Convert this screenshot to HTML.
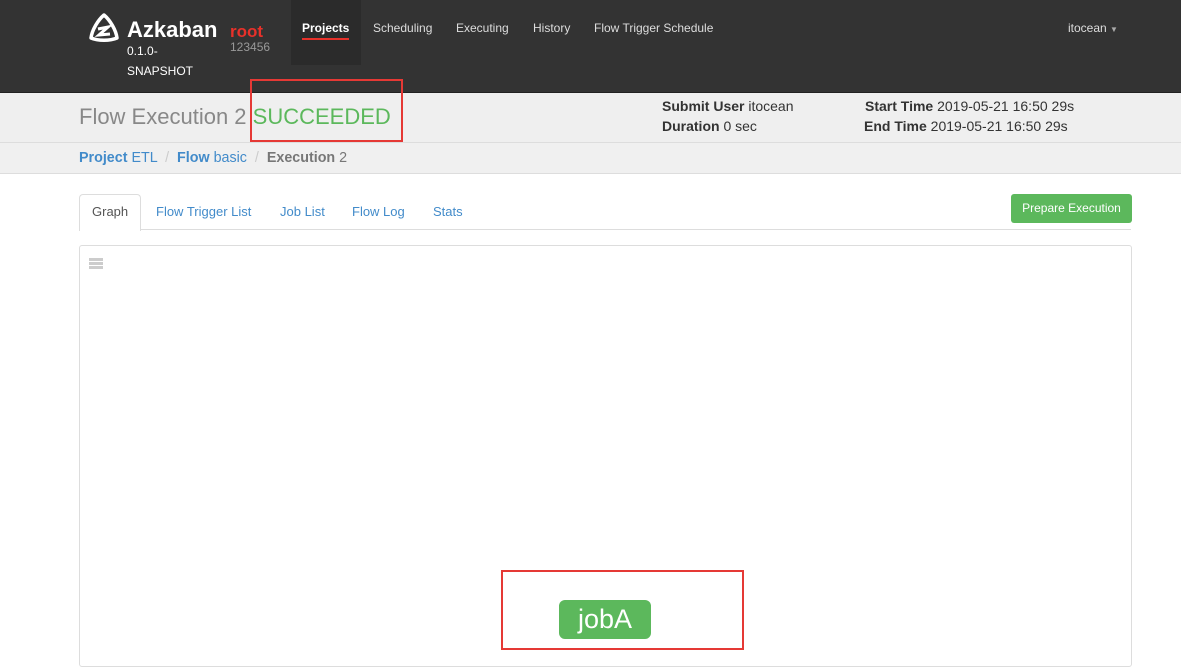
<!DOCTYPE html>
<html><head><meta charset="utf-8"><style>
body{margin:0;width:1181px;height:656px;overflow:hidden;background:#fff;font-family:"Liberation Sans",Arial,sans-serif;font-size:13px;position:relative}
.a{position:absolute;white-space:nowrap}
.nav{position:absolute;left:0;top:0;width:1181px;height:92px;background:#333}
.hdr{position:absolute;left:0;top:92px;width:1181px;height:49px;background:#efefef;border-top:1px solid #222;border-bottom:1px solid #ddd}
.bc{position:absolute;left:0;top:143px;width:1181px;height:30px;background:#f0f0f0;border-bottom:1px solid #ddd}
.blue{color:#428bca}
.info{font-size:14px;color:#333}
</style></head><body>
<div class="nav"></div>
<svg class="a" style="left:88px;top:12px" width="32" height="32" viewBox="0 0 32 32"><path d="M16 3 C10 8 4 18 3 26 C10 29 22 29 29 26 C28 18 22 8 16 3 Z" fill="none" stroke="#fff" stroke-width="3.5" stroke-linejoin="round"/><path d="M10 17 L20 15 L11 23 L22 22" fill="none" stroke="#fff" stroke-width="3"/></svg>
<div class="a" style="left:127px;top:17px;color:#fff;font-size:22px;font-weight:bold">Azkaban</div>
<div class="a" style="left:230px;top:22px;color:#e8312a;font-size:17px;font-weight:bold">root</div>
<div class="a" style="left:230px;top:40px;color:#999;font-size:12px">123456</div>
<div class="a" style="left:127px;top:44px;color:#fff;font-size:12px">0.1.0-</div>
<div class="a" style="left:127px;top:64px;color:#fff;font-size:12px">SNAPSHOT</div>
<div class="a" style="left:291px;top:0;width:70px;height:65px;background:#2b2b2b"></div>
<div class="a" style="left:302px;top:21px;color:#fff;font-weight:bold;font-size:12px">Projects</div>
<div class="a" style="left:302px;top:38px;width:47px;height:2px;background:#e8312a"></div>
<div class="a" style="left:373px;top:21px;color:#ddd;font-size:12px">Scheduling</div>
<div class="a" style="left:456px;top:21px;color:#ddd;font-size:12px">Executing</div>
<div class="a" style="left:533px;top:21px;color:#ddd;font-size:12px">History</div>
<div class="a" style="left:594px;top:21px;color:#ddd;font-size:12px">Flow Trigger Schedule</div>
<div class="a" style="left:1068px;top:21px;color:#ddd;font-size:12px">itocean <span style="font-size:8px;color:#aaa">▼</span></div>
<div class="hdr"></div>
<div class="a" style="left:79px;top:104px;font-size:22px;color:#888">Flow Execution 2 <span style="color:#5cb85c">SUCCEEDED</span></div>
<div class="a" style="left:250px;top:79px;width:149px;height:59px;border:2px solid #e53935"></div>
<div class="a info" style="left:662px;top:98px"><b>Submit User</b> itocean</div>
<div class="a info" style="left:662px;top:118px"><b>Duration</b> 0 sec</div>
<div class="a info" style="left:865px;top:98px"><b>Start Time</b> 2019-05-21 16:50 29s</div>
<div class="a info" style="left:864px;top:118px"><b>End Time</b> 2019-05-21 16:50 29s</div>
<div class="bc"></div>
<div class="a" style="left:79px;top:150px;font-size:14.3px"><span class="blue"><b>Project</b> ETL</span> <span style="color:#ccc">&nbsp;/&nbsp;</span> <span class="blue"><b>Flow</b> basic</span> <span style="color:#ccc">&nbsp;/&nbsp;</span> <span style="color:#777"><b>Execution</b> 2</span></div>
<div class="a" style="left:79px;top:229px;width:1052px;height:1px;background:#ddd"></div>
<div class="a" style="left:79px;top:194px;width:60px;height:36px;background:#fff;border:1px solid #ddd;border-bottom:none;border-radius:4px 4px 0 0"></div>
<div class="a" style="left:92px;top:204px;color:#555">Graph</div>
<div class="a" style="left:156px;top:204px" ><span class="blue">Flow Trigger List</span></div>
<div class="a" style="left:280px;top:204px" ><span class="blue">Job List</span></div>
<div class="a" style="left:352px;top:204px" ><span class="blue">Flow Log</span></div>
<div class="a" style="left:433px;top:204px" ><span class="blue">Stats</span></div>
<div class="a" style="left:1011px;top:194px;width:121px;height:29px;background:#5cb85c;border-radius:3px;color:#fff;font-size:12px;line-height:29px;text-align:center">Prepare Execution</div>
<div class="a" style="left:79px;top:245px;width:1051px;height:420px;border:1px solid #ddd;border-radius:3px"></div>
<div class="a" style="left:89px;top:258px;width:14px;height:12px;background:repeating-linear-gradient(#ccc 0 3px,#fff 3px 4px)"></div>
<div class="a" style="left:501px;top:570px;width:239px;height:76px;border:2px solid #e53935"></div>
<div class="a" style="left:559px;top:600px;width:92px;height:39px;background:#5cb85c;border-radius:6px;color:#fff;font-size:27px;line-height:39px;text-align:center">jobA</div>
</body></html>
